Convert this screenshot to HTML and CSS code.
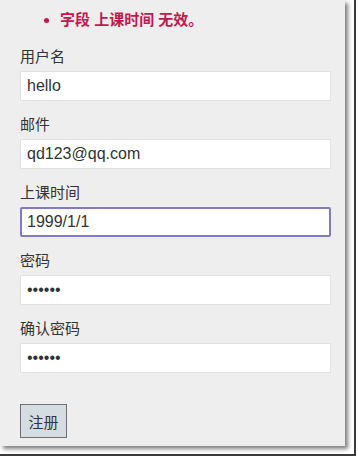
FILE: index.html
```html
<!DOCTYPE html>
<html lang="zh">
<head>
<meta charset="utf-8">
<title>注册</title>
<link rel="stylesheet" href="styles.css">
</head>
<body>
<div class="frame">
  <div class="panel">
    <ul class="errors">
      <li>字段 上课时间 无效。</li>
    </ul>
    <form class="form">
      <div class="field">
        <label class="label">用户名</label>
        <input class="input" type="text" value="hello">
      </div>
      <div class="field">
        <label class="label">邮件</label>
        <input class="input" type="text" value="qd123@qq.com">
      </div>
      <div class="field">
        <label class="label">上课时间</label>
        <input class="input input-focus" type="text" value="1999/1/1">
      </div>
      <div class="field">
        <label class="label">密码</label>
        <input class="input" type="password" value="123456">
      </div>
      <div class="field">
        <label class="label">确认密码</label>
        <input class="input" type="password" value="123456">
      </div>
      <div class="actions">
        <button class="btn" type="button">注册</button>
      </div>
    </form>
  </div>
</div>
</body>
</html>
```

FILE: styles.css
```css
html, body {
  margin: 0;
  padding: 0;
  background: #ffffff;
}
body {
  font-family: "Liberation Sans", "Noto Sans CJK SC", sans-serif;
  color: #333333;
}
.frame {
  width: 354px;
  height: 454px;
  border-right: 2px solid #3a3a3a;
  border-bottom: 2px solid #3a3a3a;
  background: #ffffff;
}
.panel {
  width: 345px;
  height: 446px;
  box-sizing: border-box;
  background: #eeeeee;
  padding: 10px 14px 0 20px;
  box-shadow: 3px 3px 4px rgba(0, 0, 0, 0.5);
}
.errors {
  margin: 0 0 17px 0;
  padding: 0 0 0 40px;
  color: #c8154c;
  font-weight: bold;
  font-size: 15px;
  line-height: 20px;
}
.form {
  display: flex;
  flex-direction: column;
  gap: 14px;
}
.field {
  display: flex;
  flex-direction: column;
  gap: 4px;
}
.label {
  font-size: 15px;
  line-height: 20px;
  color: #333333;
}
.input {
  width: 311px;
  height: 30px;
  box-sizing: border-box;
  margin: 0;
  border: 1px solid #e2e2e2;
  background: #ffffff;
  padding: 0 6px;
  font-family: "Liberation Sans", "Noto Sans CJK SC", sans-serif;
  font-size: 16px;
  color: #333333;
  outline: none;
}
.input-focus {
  border: 2px solid #8379c9;
  border-radius: 2px;
  padding: 0 5px;
}
.actions {
  padding-top: 17px;
}
.btn {
  width: 47px;
  height: 34px;
  box-sizing: border-box;
  margin: 0;
  padding: 0;
  background: #d5dde2;
  border: 1px solid #707070;
  font-family: "Liberation Sans", "Noto Sans CJK SC", sans-serif;
  font-size: 15px;
  color: #333333;
}
```
